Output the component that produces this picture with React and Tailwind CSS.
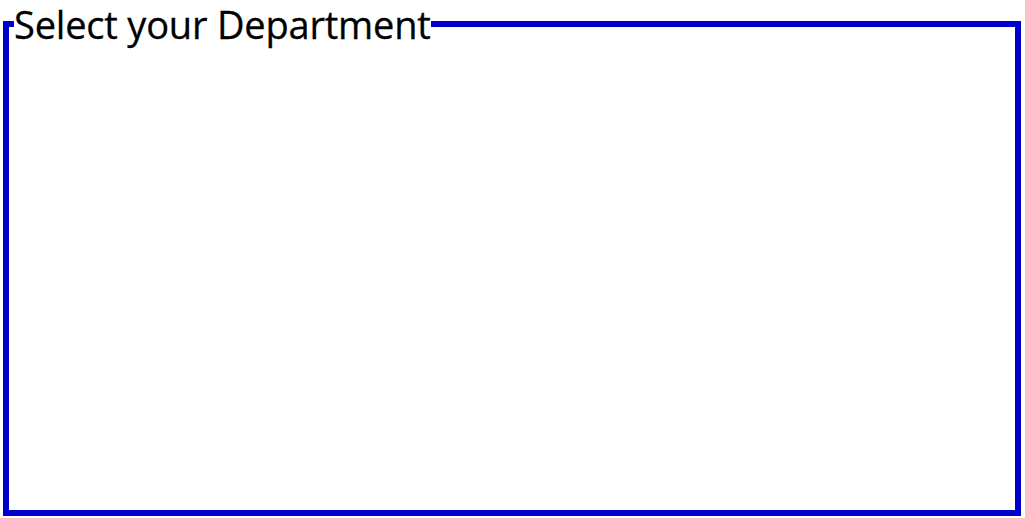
import React from 'react';

const App = () => {
  return (
    <div className="w-full h-[518px] bg-white">
      <fieldset className="ml-[3px] mr-[4px] h-[516px] border-[6px] border-solid border-[#0000CC] pl-[5px]">
        <legend className="text-[38px] leading-[48px] font-medium tracking-[-0.2px] text-black [-webkit-text-stroke:0.3px_black] font-['Open_Sans',sans-serif]">
          Select your Department
        </legend>
      </fieldset>
    </div>
  );
};

export default App;
